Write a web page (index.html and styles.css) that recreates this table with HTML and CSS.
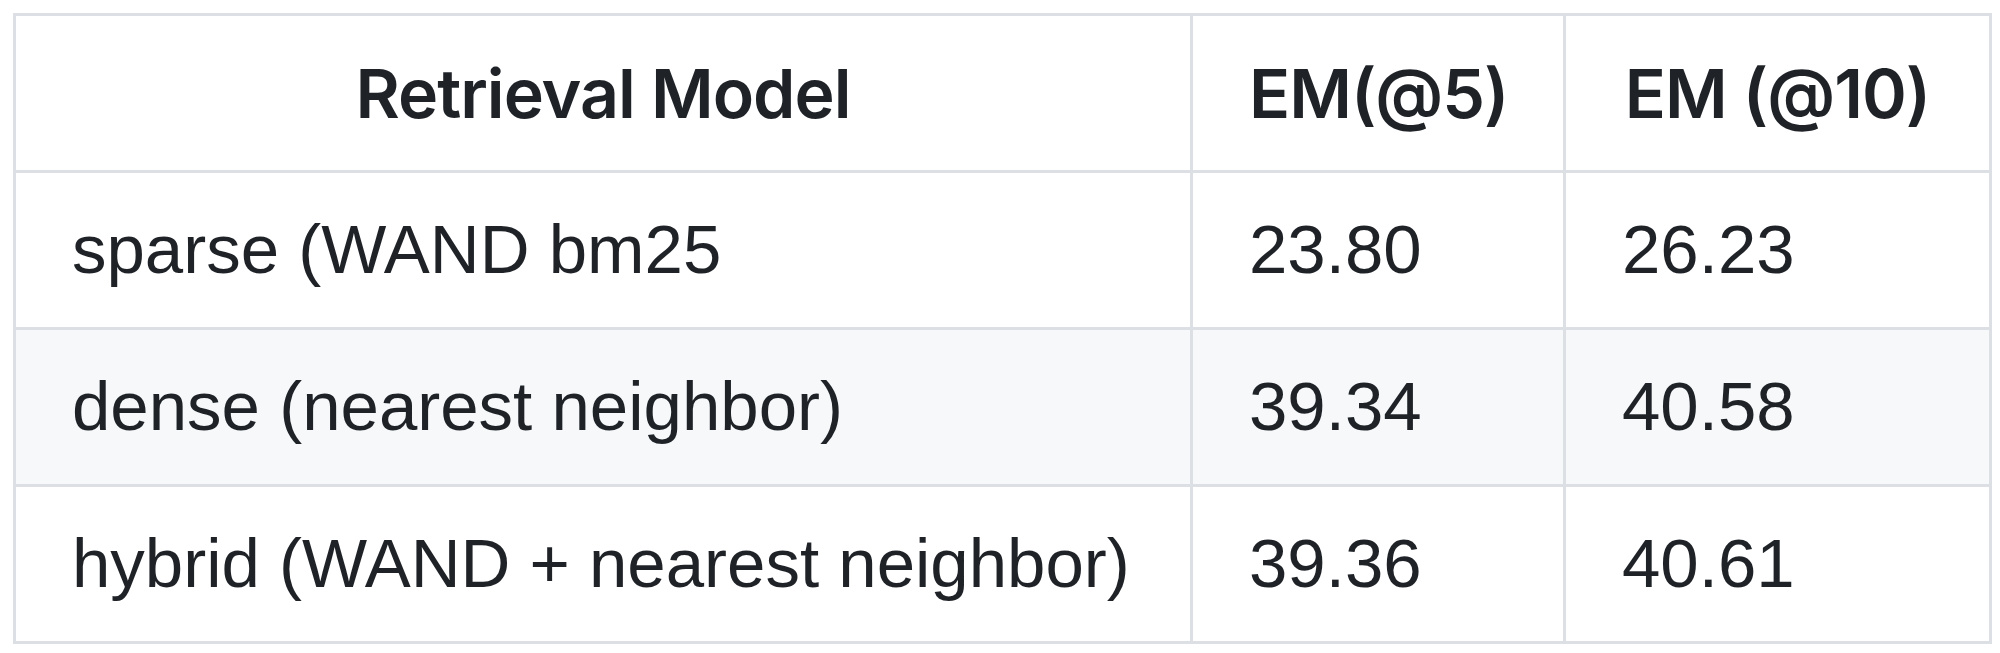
FILE: index.html
```html
<!DOCTYPE html>
<html>
<head>
<meta charset="utf-8">
<link rel="stylesheet" href="styles.css">
</head>
<body>
<table class="results">
  <colgroup>
    <col class="c-model">
    <col class="c-em5">
    <col class="c-em10">
  </colgroup>
  <thead>
    <tr>
      <th>Retrieval Model</th>
      <th>EM(@5)</th>
      <th>EM (@10)</th>
    </tr>
  </thead>
  <tbody>
    <tr>
      <td>sparse (WAND bm25</td>
      <td>23.80</td>
      <td>26.23</td>
    </tr>
    <tr>
      <td>dense (nearest neighbor)</td>
      <td>39.34</td>
      <td>40.58</td>
    </tr>
    <tr>
      <td>hybrid (WAND + nearest neighbor)</td>
      <td>39.36</td>
      <td>40.61</td>
    </tr>
  </tbody>
</table>
</body>
</html>
```

FILE: styles.css
```css
html, body {
  margin: 0;
  padding: 0;
  background: #ffffff;
}

.results {
  margin: 13px 0 0 13px;
  width: 1976px;
  table-layout: fixed;
  border-collapse: collapse;
  color: #1f2328;
  font-family: "Liberation Sans", Arial, sans-serif;
  font-size: 69px;
  line-height: 102px;
}

.c-model { width: 1177px; }
.c-em5 { width: 373px; }
.c-em10 { width: 426px; }

.results th,
.results td {
  border: 3px solid #dce0e5;
  padding: 26px 56px;
  white-space: nowrap;
}

.results th {
  font-family: Inter, "Noto Sans", sans-serif;
  font-size: 68px;
  font-weight: 600;
  letter-spacing: -1px;
  text-align: center;
}

.results td {
  text-align: left;
}

.results tbody tr:nth-child(2) {
  background: #f6f8fa;
}
```
